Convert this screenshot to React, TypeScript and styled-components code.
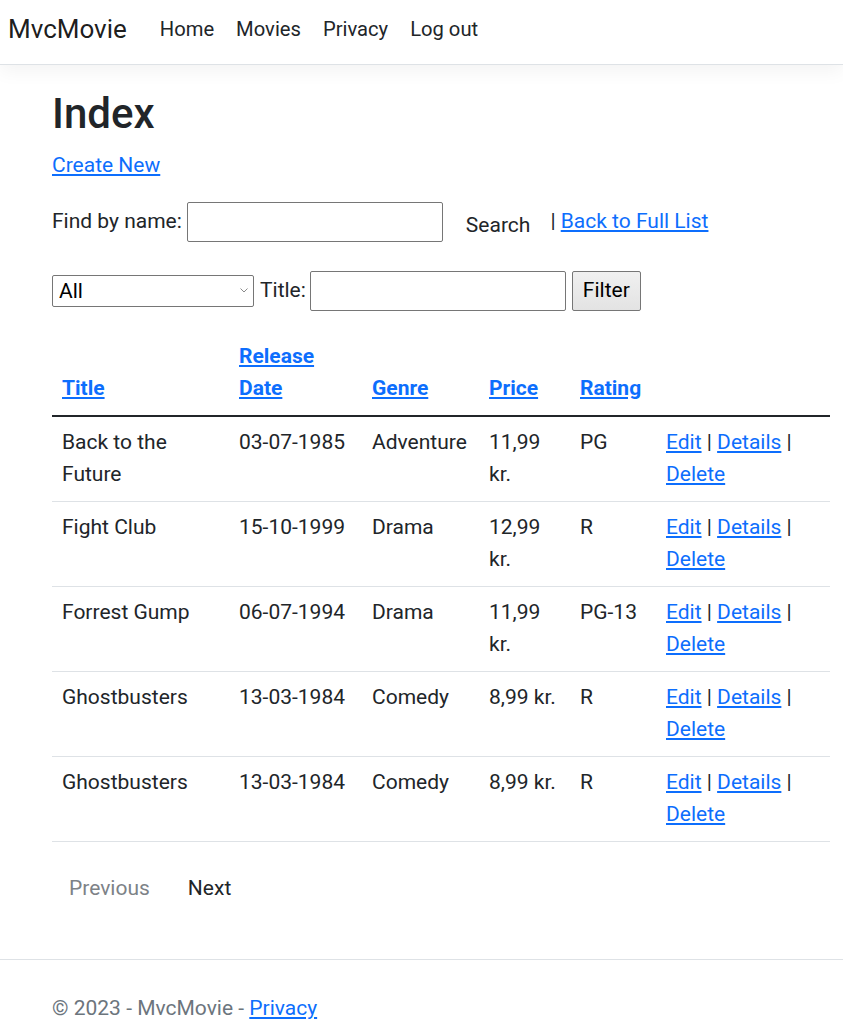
import React from 'react'
import styled, { createGlobalStyle } from 'styled-components'

const GlobalStyle = createGlobalStyle`
    html, body {
        margin: 0;
        padding: 0;
        background: #fff;
    }
    body {
        font-family: "Segoe UI", Roboto, "Liberation Sans", sans-serif;
        font-size: 21px;
        line-height: 31.5px;
        color: #212529;
    }
    * {
        box-sizing: border-box;
    }
`

const movies = [
    { title: 'Back to the Future', date: '03-07-1985', genre: 'Adventure', price: '11,99 kr.', rating: 'PG' },
    { title: 'Fight Club', date: '15-10-1999', genre: 'Drama', price: '12,99 kr.', rating: 'R' },
    { title: 'Forrest Gump', date: '06-07-1994', genre: 'Drama', price: '11,99 kr.', rating: 'PG-13' },
    { title: 'Ghostbusters', date: '13-03-1984', genre: 'Comedy', price: '8,99 kr.', rating: 'R' },
    { title: 'Ghostbusters', date: '13-03-1984', genre: 'Comedy', price: '8,99 kr.', rating: 'R' },
]

const Header = styled.header`
    height: 65px;
    display: flex;
    align-items: center;
    padding: 0 8px 5px;
    border-bottom: 1px solid #dee2e6;
    box-shadow: 0 6px 18px rgba(0, 0, 0, 0.05);
`

const Brand = styled.a`
    font-size: 26px;
    color: rgba(0, 0, 0, 0.9);
    text-decoration: none;
    margin-right: 22px;
`

const NavLink = styled.a`
    font-size: 20.2px;
    color: #212529;
    text-decoration: none;
    padding: 0 11px;
`

const Main = styled.main`
    padding: 24px 13px 21px 52px;
`

const Title = styled.h1`
    font-size: 42px;
    font-weight: 500;
    line-height: 50px;
    margin: 0 0 11px;
`

const Link = styled.a<{ $bold?: boolean }>`
    color: #0d6efd;
    text-decoration: underline;
    font-weight: ${p => (p.$bold ? 700 : 400)};
`

const Para = styled.p`
    margin: 0 0 20px;
`

const FormRow = styled.div<{ $mb: number }>`
    display: flex;
    align-items: center;
    height: 40px;
    margin-bottom: ${p => p.$mb}px;
    white-space: nowrap;
`

const TextInput = styled.input`
    width: 256px;
    height: 40px;
    border: 1px solid #767676;
    border-radius: 2px;
    font: inherit;
    margin: 0 5px;
    padding: 0 4px;
`

const PlainButton = styled.button`
    font: inherit;
    line-height: 31.5px;
    background: transparent;
    border: 1.5px solid transparent;
    padding: 0 17px;
    margin: 8px 2px 0 0;
    color: #212529;
`

const GrayButton = styled.button`
    font: inherit;
    height: 40px;
    padding: 0 10px;
    background: linear-gradient(#f0f0f0, #e3e3e3);
    border: 1px solid #767676;
    border-radius: 2px;
    color: #000;
    margin-left: 1px;
`

const SelectWrap = styled.div`
    position: relative;
    width: 202px;
    height: 32px;
    svg {
        position: absolute;
        right: 6px;
        top: 13px;
        pointer-events: none;
    }
`

const Select = styled.select`
    appearance: none;
    width: 100%;
    height: 100%;
    border: 1px solid #767676;
    border-radius: 2px;
    background: #fff;
    font: inherit;
    line-height: 28px;
    padding: 0 6px;
    color: #000;
`

const Label = styled.span`
    margin-left: 6px;
`

const Table = styled.table`
    width: 778px;
    border-collapse: collapse;
    table-layout: fixed;
    margin-bottom: 21px;
    th, td {
        padding: 10.5px 10px;
        text-align: left;
    }
    th {
        vertical-align: bottom;
        border-bottom: 2px solid #212529;
    }
    td {
        vertical-align: top;
        border-bottom: 1px solid #dee2e6;
    }
`

const Pager = styled.div`
    display: flex;
    gap: 4px;
`

const PageButton = styled.a<{ $disabled?: boolean }>`
    padding: 9px 16px 10px;
    border: 1.5px solid transparent;
    color: ${p => (p.$disabled ? '#7d8287' : '#212529')};
    text-decoration: none;
`

const Footer = styled.footer`
    border-top: 1px solid #dee2e6;
    margin-top: 23px;
    padding-left: 52px;
    line-height: 96px;
    color: #6c757d;
`

export default function App() {
    return (
        <>
            <GlobalStyle />
            <Header>
                <Brand>MvcMovie</Brand>
                <NavLink>Home</NavLink>
                <NavLink>Movies</NavLink>
                <NavLink>Privacy</NavLink>
                <NavLink>Log out</NavLink>
            </Header>
            <Main>
                <Title>Index</Title>
                <Para><Link href="#">Create New</Link></Para>
                <FormRow $mb={29}>
                    Find by name:
                    <TextInput type="text" />
                    <PlainButton>Search</PlainButton>
                    |&nbsp;<Link href="#">Back to Full List</Link>
                </FormRow>
                <FormRow $mb={20}>
                    <SelectWrap>
                        <Select defaultValue="All">
                            <option>All</option>
                        </Select>
                        <svg width="8" height="5" viewBox="0 0 8 5">
                            <path d="M0.5 0.5 L4 4 L7.5 0.5" fill="none" stroke="#8a8a8a" strokeWidth="1" />
                        </svg>
                    </SelectWrap>
                    <Label>Title:</Label>
                    <TextInput type="text" style={{ margin: '0 5px 0 4px' }} />
                    <GrayButton>Filter</GrayButton>
                </FormRow>
                <Table>
                    <colgroup>
                        <col style={{ width: 177 }} />
                        <col style={{ width: 133 }} />
                        <col style={{ width: 117 }} />
                        <col style={{ width: 91 }} />
                        <col style={{ width: 86 }} />
                        <col style={{ width: 174 }} />
                    </colgroup>
                    <thead>
                        <tr>
                            <th><Link $bold href="#">Title</Link></th>
                            <th><Link $bold href="#">Release Date</Link></th>
                            <th><Link $bold href="#">Genre</Link></th>
                            <th><Link $bold href="#">Price</Link></th>
                            <th><Link $bold href="#">Rating</Link></th>
                            <th></th>
                        </tr>
                    </thead>
                    <tbody>
                        {movies.map((m, i) => (
                            <tr key={i}>
                                <td>{m.title}</td>
                                <td>{m.date}</td>
                                <td>{m.genre}</td>
                                <td>{m.price}</td>
                                <td>{m.rating}</td>
                                <td>
                                    <Link href="#">Edit</Link> | <Link href="#">Details</Link> |{' '}
                                    <Link href="#">Delete</Link>
                                </td>
                            </tr>
                        ))}
                    </tbody>
                </Table>
                <Pager>
                    <PageButton $disabled>Previous</PageButton>
                    <PageButton href="#">Next</PageButton>
                </Pager>
            </Main>
            <Footer>
                © 2023 - MvcMovie - <Link href="#">Privacy</Link>
            </Footer>
        </>
    )
}
